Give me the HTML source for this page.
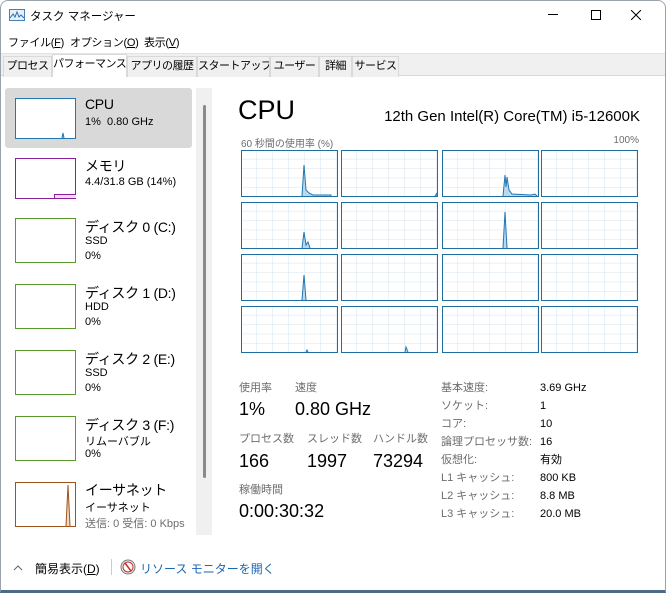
<!DOCTYPE html>
<html><head><meta charset="utf-8"><style>
*{margin:0;padding:0;box-sizing:border-box}
body{width:666px;height:593px;background:#fff;font-family:"Liberation Sans","Noto Sans CJK JP",sans-serif;color:#000;position:relative;overflow:hidden}
.a{position:absolute;white-space:nowrap}
.win{position:absolute;left:0;top:0;width:666px;height:593px;border:1px solid #9aa3ad;border-bottom:3px solid #4a6a8a;border-radius:8px 8px 0 0;background:#fff}
.tabs{position:absolute;left:1px;top:53px;width:664px;height:23px;background:#f0f0f0;border-top:1px solid #e3e3e3;border-bottom:1px solid #d9d9d9}
.tab{position:absolute;top:2px;height:21px;font-size:11px;line-height:19px;text-align:center;white-space:nowrap;overflow:hidden;letter-spacing:-0.5px;border:1px solid #d9d9d9;border-bottom:none;background:#f0f0f0}
.box{position:absolute;left:15px;width:61px;height:45px;border:1px solid}
.t{font-size:14px;letter-spacing:-0.3px}
.s{font-size:11px}
.g{color:#6d6d6d}
</style></head><body>
<div class="win"></div>
<svg class="a" style="left:9px;top:9px" width="16" height="12"><rect x="0.5" y="0.5" width="15" height="11" fill="#e6f0fa" stroke="#4a7fb5"/><polyline points="1,9 4,5 6,8 8,3 10,8 12,6 15,9" fill="none" stroke="#2a6fb0"/></svg>
<div class="a" style="left:30px;top:8px;font-size:11.5px">タスク マネージャー</div>
<div class="a" style="left:548px;top:14px;width:10px;height:1px;background:#000"></div>
<div class="a" style="left:591px;top:10px;width:10px;height:10px;border:1px solid #000"></div>
<svg class="a" style="left:631px;top:10px" width="10" height="10"><path d="M0 0L10 10M10 0L0 10" stroke="#000" stroke-width="1"/></svg>
<div class="a" style="left:8px;top:34px;font-size:11px;letter-spacing:-0.3px">ファイル(<u>F</u>)</div>
<div class="a" style="left:70px;top:34px;font-size:11px;letter-spacing:-0.3px">オプション(<u>O</u>)</div>
<div class="a" style="left:144px;top:34px;font-size:11px;letter-spacing:-0.3px">表示(<u>V</u>)</div>
<div class="tabs">
<div class="tab" style="left:2px;width:49px">プロセス</div>
<div class="tab" style="left:51px;top:0;height:23px;width:75px;background:#fff">パフォーマンス</div>
<div class="tab" style="left:126px;width:70px">アプリの履歴</div>
<div class="tab" style="left:196px;width:73px">スタートアップ</div>
<div class="tab" style="left:269px;width:49px">ユーザー</div>
<div class="tab" style="left:318px;width:33px">詳細</div>
<div class="tab" style="left:351px;width:47px">サービス</div>
</div>
<div class="a" style="left:5px;top:88px;width:187px;height:60px;background:#d9d9d9;border-radius:3px"></div>
<div class="box" style="top:98px;height:41px;border-color:#1f77b4;background:#fff"><svg width="59" height="39"><polyline points="46,39 47,34 48,39" fill="#bcd8ec" stroke="#1f77b4"/></svg></div>
<div class="a t" style="left:85px;top:96px">CPU</div><div class="a s" style="left:85px;top:116px">1%&nbsp; 0.80 GHz</div>
<div class="box" style="top:158px;height:41px;border-color:#8b1e9b"><div style="position:absolute;left:38px;bottom:0;width:22px;height:4px;background:#f3d9f5;border-top:1px solid #8b1e9b;border-left:1px solid #8b1e9b"></div></div>
<div class="a t" style="left:85px;top:156px">メモリ</div><div class="a s" style="left:85px;top:176px">4.4/31.8 GB (14%)</div>
<div class="box" style="top:218px;border-color:#5a9a2a"></div>
<div class="a t" style="left:85px;top:217px">ディスク 0 (C:)</div><div class="a s" style="left:85px;top:235px">SSD</div><div class="a s" style="left:85px;top:250px">0%</div>
<div class="box" style="top:284px;border-color:#5a9a2a"></div>
<div class="a t" style="left:85px;top:283px">ディスク 1 (D:)</div><div class="a s" style="left:85px;top:301px">HDD</div><div class="a s" style="left:85px;top:316px">0%</div>
<div class="box" style="top:350px;border-color:#5a9a2a"></div>
<div class="a t" style="left:85px;top:349px">ディスク 2 (E:)</div><div class="a s" style="left:85px;top:367px">SSD</div><div class="a s" style="left:85px;top:382px">0%</div>
<div class="box" style="top:416px;border-color:#5a9a2a"></div>
<div class="a t" style="left:85px;top:415px">ディスク 3 (F:)</div><div class="a s" style="left:85px;top:433px">リムーバブル</div><div class="a s" style="left:85px;top:448px">0%</div>
<div class="box" style="top:482px;border-color:#a0521a"><svg width="59" height="43"><polyline points="50,43 52,2 54,43" fill="#f0d8c4" stroke="#a0521a"/></svg></div>
<div class="a t" style="left:85px;top:480px">イーサネット</div><div class="a s" style="left:85px;top:499px">イーサネット</div><div class="a s g" style="left:85px;top:515px">送信: 0 受信: 0 Kbps</div>
<div class="a" style="left:196px;top:88px;width:16px;height:447px;background:#f0f0f0"></div>
<div class="a" style="left:203px;top:105px;width:3px;height:373px;background:#8a8a8a;border-radius:2px"></div>
<div class="a" style="left:238px;top:95px;font-size:27px">CPU</div>
<div class="a" style="right:26px;top:108px;font-size:15px">12th Gen Intel(R) Core(TM) i5-12600K</div>
<div class="a g" style="left:241px;top:135px;font-size:10px">60 秒間の使用率 (%)</div>
<div class="a g" style="right:27px;top:135px;font-size:10px">100%</div>
<svg class="a" style="left:241px;top:150px" width="399" height="205">
<defs><pattern id="p" x="0" y="0" width="16" height="9.4" patternUnits="userSpaceOnUse"><path d="M16 0V9.4M0 9.4H16" stroke="#d3e5f0" fill="none"/></pattern>
<g id="c"><rect x="0.5" y="0.5" width="96" height="46" fill="url(#p)" stroke="#1e6fa0"/></g></defs>
<g><use href="#c" x="0" y="0"/><use href="#c" x="100" y="0"/><use href="#c" x="201" y="0"/><use href="#c" x="300" y="0"/></g>
<g transform="translate(0,52)"><use href="#c" x="0"/><use href="#c" x="100"/><use href="#c" x="201"/><use href="#c" x="300"/></g>
<g transform="translate(0,104)"><use href="#c" x="0"/><use href="#c" x="100"/><use href="#c" x="201"/><use href="#c" x="300"/></g>
<g transform="translate(0,156)"><use href="#c" x="0"/><use href="#c" x="100"/><use href="#c" x="201"/><use href="#c" x="300"/></g>
<g fill="#bcd8ec" stroke="#1f77b4" stroke-width="1">
<polyline points="61,46 63,15 65,40 68,43 72,45 90,45 90,46"/>
<polyline points="194,46 196,43 196,46"/>
<polyline points="262,46 264,25 265,37 266,27 268,40 271,44 290,45 294,44 296,46"/>
<polyline points="61,98 63,82 65,95 67,92 69,98"/>
<polyline points="262,98 264,62 266,98"/>
<polyline points="61,150 63,125 65,150"/>
<polyline points="65,202 66,200 67,202"/>
<polyline points="164,202 165,197 167,202"/>
</g>
</svg>
<div class="a g" style="left:239px;top:379px;font-size:11px">使用率</div>
<div class="a g" style="left:295px;top:379px;font-size:11px">速度</div>
<div class="a" style="left:239px;top:399px;font-size:18px">1%</div>
<div class="a" style="left:295px;top:399px;font-size:18px">0.80 GHz</div>
<div class="a g" style="left:239px;top:430px;font-size:11px">プロセス数</div>
<div class="a g" style="left:307px;top:430px;font-size:11px">スレッド数</div>
<div class="a g" style="left:373px;top:430px;font-size:11px">ハンドル数</div>
<div class="a" style="left:239px;top:451px;font-size:18px">166</div>
<div class="a" style="left:307px;top:451px;font-size:18px">1997</div>
<div class="a" style="left:373px;top:451px;font-size:18px">73294</div>
<div class="a g" style="left:239px;top:481px;font-size:11px">稼働時間</div>
<div class="a" style="left:239px;top:501px;font-size:18px">0:00:30:32</div>
<div class="a g" style="left:441px;top:379px;font-size:11px;line-height:18px">基本速度:<br>ソケット:<br>コア:<br>論理プロセッサ数:<br>仮想化:<br>L1 キャッシュ:<br>L2 キャッシュ:<br>L3 キャッシュ:</div>
<div class="a" style="left:540px;top:379px;font-size:11px;line-height:18px">3.69 GHz<br>1<br>10<br>16<br>有効<br>800 KB<br>8.8 MB<br>20.0 MB</div>
<svg class="a" style="left:13px;top:565px" width="10" height="6"><path d="M1 5L5 1L9 5" stroke="#666" fill="none"/></svg>
<div class="a" style="left:35px;top:560px;font-size:12px">簡易表示(<u>D</u>)</div>
<div class="a" style="left:111px;top:559px;width:1px;height:16px;background:#ccc"></div>
<svg class="a" style="left:120px;top:559px" width="16" height="16"><circle cx="8" cy="8" r="7" fill="#f4efe8" stroke="#777"/><circle cx="8" cy="8" r="5" fill="#fff" stroke="#c03030"/><path d="M5 4L11 12" stroke="#c03030" stroke-width="1.5"/></svg>
<div class="a" style="left:140px;top:560px;font-size:12px;color:#1a66b3">リソース モニターを開く</div>
</body></html>
